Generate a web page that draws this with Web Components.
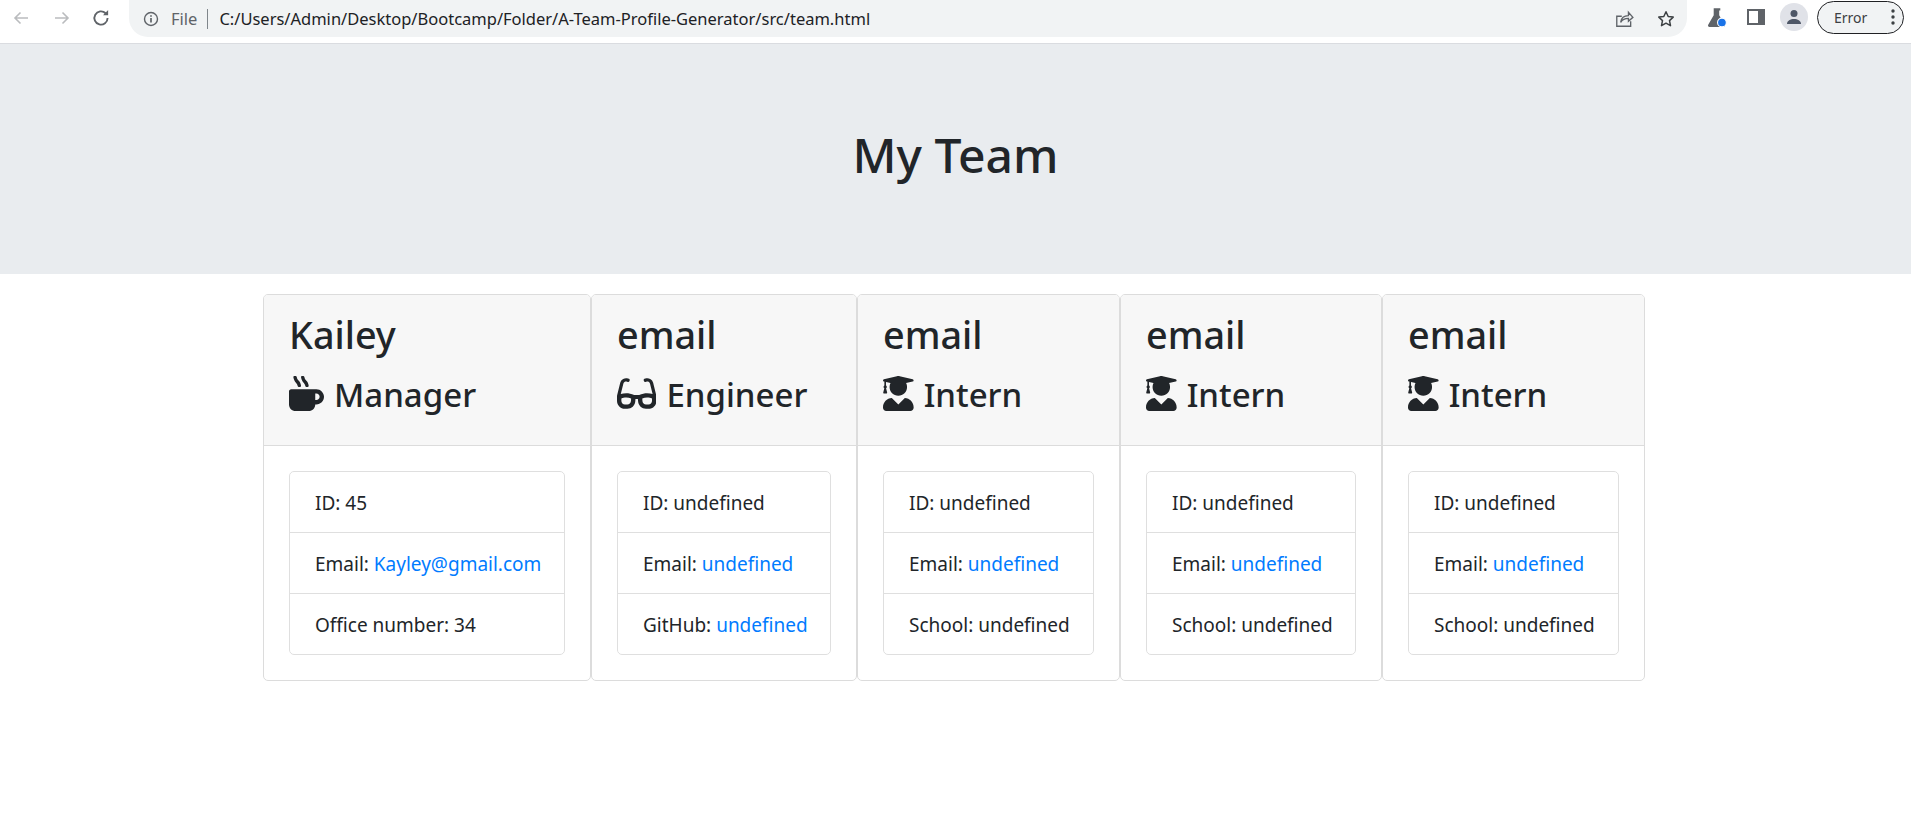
<!DOCTYPE html>
<html>
<head>
<meta charset="utf-8">
<title>My Team</title>
<style>
  html, body { margin: 0; padding: 0; background: #fff; }
  body { font-family: "Noto Sans", "Open Sans", sans-serif; color: #212529; }
</style>
</head>
<body>

<browser-bar url="C:/Users/Admin/Desktop/Bootcamp/Folder/A-Team-Profile-Generator/src/team.html"></browser-bar>
<team-hero>My Team</team-hero>

<team-row>
  <employee-card style="width:328px" name="Kailey" role="Manager" icon="mug">
    <info-row>ID: 45</info-row>
    <info-row>Email: <a href="#">Kayley@gmail.com</a></info-row>
    <info-row>Office number: 34</info-row>
  </employee-card>
  <employee-card style="width:266px" name="email" role="Engineer" icon="glasses">
    <info-row>ID: undefined</info-row>
    <info-row>Email: <a href="#">undefined</a></info-row>
    <info-row>GitHub: <a href="#">undefined</a></info-row>
  </employee-card>
  <employee-card style="width:263px" name="email" role="Intern" icon="grad">
    <info-row>ID: undefined</info-row>
    <info-row>Email: <a href="#">undefined</a></info-row>
    <info-row>School: undefined</info-row>
  </employee-card>
  <employee-card style="width:262px" name="email" role="Intern" icon="grad">
    <info-row>ID: undefined</info-row>
    <info-row>Email: <a href="#">undefined</a></info-row>
    <info-row>School: undefined</info-row>
  </employee-card>
  <employee-card style="width:263px" name="email" role="Intern" icon="grad">
    <info-row>ID: undefined</info-row>
    <info-row>Email: <a href="#">undefined</a></info-row>
    <info-row>School: undefined</info-row>
  </employee-card>
</team-row>

<script>
const ICONS = {
  mug: {
    box: "0 0 512 512",
    d: "M127.1 146.5c1.3 7.7 8 13.5 16 13.5h16.5c9.8 0 17.6-8.5 16.3-18-3.8-28.2-16.4-54.2-36.6-74.7-14.4-14.7-23.6-33.3-26.4-53.5C111.8 5.9 105 0 96.8 0H80.4C70.6 0 63 8.5 64.1 18c3.9 31.9 18 61.3 40.6 84.4 12 12.2 19.7 27.5 22.4 44.1zm112 0c1.3 7.7 8 13.5 16 13.5h16.5c9.8 0 17.6-8.5 16.3-18-3.8-28.2-16.4-54.2-36.6-74.7-14.4-14.7-23.6-33.3-26.4-53.5C223.8 5.9 217 0 208.8 0h-16.4c-9.8 0-17.5 8.5-16.3 18 3.9 31.9 18 61.3 40.6 84.4 12 12.2 19.7 27.5 22.4 44.1zM400 192H32c-17.7 0-32 14.3-32 32v192c0 53 43 96 96 96h192c53 0 96-43 96-96h16c61.8 0 112-50.2 112-112s-50.2-112-112-112zm0 160h-16v-96h16c26.5 0 48 21.5 48 48s-21.5 48-48 48z"
  },
  glasses: {
    box: "0 0 576 512",
    d: "M574.1 280.37L528.75 98.66c-5.91-23.7-21.59-44.05-43-55.81-21.44-11.73-46.97-14.11-70.19-6.33l-15.25 5.08c-8.39 2.79-12.92 11.86-10.12 20.24l5.06 15.18c2.79 8.38 11.85 12.91 20.23 10.12l13.18-4.39c10.87-3.62 23-3.57 33.16 1.73 10.29 5.37 17.57 14.56 20.37 25.82l38.46 153.82c-22.19-6.81-49.79-12.46-81.2-12.46-34.77 0-73.98 7.02-114.85 26.74h-73.18c-40.87-19.74-80.08-26.75-114.86-26.75-31.42 0-59.02 5.65-81.21 12.46l38.46-153.82c2.79-11.25 10.09-20.45 20.38-25.81 10.16-5.3 22.28-5.35 33.15-1.73l13.17 4.39c8.38 2.79 17.44-1.74 20.23-10.12l5.06-15.18c2.8-8.38-1.73-17.45-10.12-20.24l-15.25-5.08c-23.22-7.78-48.75-5.41-70.19 6.33-21.41 11.77-37.09 32.11-43 55.8L1.9 280.37A64.218 64.218 0 0 0 0 295.86v70.25C0 429.01 51.58 480 115.2 480h37.12c60.28 0 110.37-45.94 114.88-105.37l2.93-38.63h35.75l2.93 38.63C313.31 434.06 363.4 480 423.68 480h37.12c63.62 0 115.2-50.99 115.2-113.88v-70.25c0-5.23-.64-10.43-1.9-15.5zm-370.72 89.42c-1.97 25.91-24.4 46.21-51.06 46.21H115.2C86.97 416 64 393.62 64 366.11v-37.54c18.12-6.49 43.42-12.57 72.87-12.57 23.86 0 47.26 4.33 69.93 12.57l-3.43 41.22zM512 366.12c0 27.51-22.97 49.88-51.2 49.88h-37.12c-26.67 0-49.1-20.3-51.06-46.21l-3.13-41.22c22.67-8.24 46.07-12.57 69.93-12.57 29.45 0 54.75 6.08 72.87 12.57v37.55z"
  },
  grad: {
    box: "0 0 448 512",
    d: "M319.4 320.6L224 416l-95.4-95.4C57.1 323.7 0 382.2 0 454.4v9.6c0 26.5 21.5 48 48 48h352c26.5 0 48-21.5 48-48v-9.6c0-72.2-57.1-130.7-128.6-133.8zM13.6 79.8l6.4 1.5v58.4c-7 4.2-12 11.5-12 20.3 0 8.4 4.6 15.4 11.1 19.7L3.5 242c-1.7 6.9 2.1 14 7.6 14h41.8c5.5 0 9.3-7.1 7.6-14l-15.6-62.3C51.4 175.4 56 168.4 56 160c0-8.8-5-16.1-12-20.3V87.1l66 15.9c-8.6 17.2-14 36.4-14 57 0 70.7 57.3 128 128 128s128-57.3 128-128c0-20.6-5.3-39.8-14-57l96.3-23.2c18.2-4.4 18.2-27.1 0-31.5l-190.4-46c-13-3.1-26.7-3.1-39.7 0L13.6 48.2c-18.1 4.4-18.1 27.2 0 31.6z"
  }
};

class BrowserBar extends HTMLElement {
  constructor() {
    super();
    this.attachShadow({mode: "open"});
  }

  connectedCallback() {
    this.shadowRoot.innerHTML = `
      <style>
        :host {
          display: flex;
          align-items: flex-start;
          height: 43px;
          border-bottom: 1px solid #dadce0;
          background: #fff;
          font-family: "Noto Sans", "Open Sans", sans-serif;
          font-size: 16.500px;
          box-sizing: content-box;
        }
        .nav { display: flex; align-items: center; height: 36px; width: 129px; flex: none; }
        .nav svg { flex: none; }
        .omni {
          flex: 1;
          height: 37px;
          display: flex;
          align-items: center;
          background: #f1f3f4;
          border-radius: 0 0 19px 19px;
          padding: 0 0 0 14px;
          min-width: 0;
          box-sizing: border-box;
        }
        .file { color: #5f6368; margin-left: 12px; }
        .sep { width: 1px; height: 20px; background: #80868b; margin: 0 11px 0 10px; }
        .url { color: #202124; white-space: nowrap; flex: 1; }
        .omni-actions { display: flex; align-items: center; gap: 22px; padding-right: 11px; }
        .tools { display: flex; align-items: center; height: 34px; flex: none; padding: 0 7px 0 19px; }
        .pill {
          display: flex;
          align-items: center;
          height: 33px;
          width: 87px;
          margin-left: 9px;
          box-sizing: border-box;
          border: 1px solid #202124;
          border-radius: 17px;
          background: #f1f3f4;
          color: #3c4043;
          font-size: 14px;
          padding-left: 16px;
        }
        .pill span { flex: 1; }
        .pill svg { margin-right: 8px; }
        .avatar {
          width: 28px;
          height: 28px;
          border-radius: 50%;
          background: #e0e2e8;
          display: flex;
          align-items: center;
          justify-content: center;
          margin-left: 14px;
        }
      </style>
      <div class="nav">
        <svg style="margin-left:11px" width="20" height="20" viewBox="0 0 20 20" fill="none" stroke="#babcbe" stroke-width="1.6"><path d="M17 10H4M9.5 4.500L4 10l5.500 5.500"/></svg>
        <svg style="margin-left:21px" width="20" height="20" viewBox="0 0 20 20" fill="none" stroke="#babcbe" stroke-width="1.6"><path d="M3 10h13M10.500 4.500L16 10l-5.500 5.500"/></svg>
        <svg style="margin-left:18px" width="22" height="22" viewBox="0 0 20 20" fill="none" stroke="#5f6368" stroke-width="1.7"><path d="M16 10a6 6 0 1 1-1.800-4.300"/><path d="M16.500 2.800v4.700h-4.700" fill="#5f6368" stroke="none"/></svg>
      </div>
      <div class="omni">
        <svg width="16" height="16" viewBox="0 0 16 16" fill="none" stroke="#5f6368" stroke-width="1.400"><circle cx="8" cy="8" r="6.500"/><path d="M8 7v4.500M8 4.300v1.500" stroke-width="1.700"/></svg>
        <span class="file">File</span>
        <span class="sep"></span>
        <span class="url">${this.getAttribute("url")}</span>
        <div class="omni-actions">
          <svg width="20" height="20" viewBox="0 0 18 18" fill="none" stroke="#5f6368" stroke-width="1.200"><path d="M15 11v4.500H2.500V6.500H7"/><path d="M6 12c.5-4 3-6 7-6V3l4 4.500L13 11V8.500c-3 0-5.500 1-7 3.500z"/></svg>
          <svg width="20" height="20" viewBox="0 0 20 20" fill="none" stroke="#3c4043" stroke-width="1.500"><path d="M10 2.800l2.200 4.700 5 .6-3.700 3.500 1 5.100-4.500-2.500-4.500 2.500 1-5.100L2.800 8.100l5-.6z" stroke-linejoin="round"/></svg>
        </div>
      </div>
      <div class="tools">
        <svg width="22" height="22" viewBox="0 0 20 20"><path d="M7 2h6v2h-1v4.500l5 8.500c.5 1-.1 2-1.200 2H3.200C2.100 19 1.500 18 2 17l5-8.500V4H7z" fill="#5f6368"/><circle cx="14.500" cy="15" r="4" fill="#1a73e8" stroke="#fff" stroke-width="1"/></svg>
        <svg style="margin-left:18px" width="20" height="20" viewBox="0 0 20 20"><path fill-rule="evenodd" d="M1 2h18v16H1zM3 4v12h9V4z" fill="#5f6368"/></svg>
        <span class="avatar"><svg width="18" height="18" viewBox="0 0 18 18" fill="#4d5666"><circle cx="9" cy="5.500" r="3.500"/><path d="M2 16c0-3.500 3.500-5 7-5s7 1.500 7 5z"/></svg></span>
        <div class="pill"><span>Error</span><svg width="4" height="16" viewBox="0 0 4 16" fill="#3c4043"><circle cx="2" cy="2" r="1.700"/><circle cx="2" cy="8" r="1.700"/><circle cx="2" cy="14" r="1.700"/></svg></div>
      </div>`;
  }
}

class TeamHero extends HTMLElement {
  constructor() {
    super();
    this.attachShadow({mode: "open"});
    this.shadowRoot.innerHTML = `
      <style>
        :host {
          display: flex;
          justify-content: center;
          align-items: flex-start;
          height: 230px;
          box-sizing: border-box;
          padding-top: 81px;
          margin-bottom: 20px;
          background: #e9ecef;
        }
        h1 { margin: 0; font-size: 48px; font-weight: 500; line-height: 60px; color: #212529; }
      </style>
      <h1><slot></slot></h1>`;
  }
}

class TeamRow extends HTMLElement {
  constructor() {
    super();
    this.attachShadow({mode: "open"});
    this.shadowRoot.innerHTML = `
      <style>
        :host { display: flex; justify-content: flex-start; padding-left: 263px; }
      </style>
      <slot></slot>`;
  }
}

class EmployeeCard extends HTMLElement {
  constructor() {
    super();
    this.attachShadow({mode: "open"});
  }

  connectedCallback() {
    const icon = ICONS[this.getAttribute("icon")];
    this.shadowRoot.innerHTML = `
      <style>
        :host {
          display: block;
          flex: none;
          box-sizing: border-box;
          border: 1px solid #dcdcdc;
          border-radius: 5px;
          overflow: hidden;
          background: #fff;
        }
        header {
          padding: 17px 25px 20px;
          height: 113px;
          background: #f7f7f7;
          border-bottom: 1px solid #dcdcdc;
        }
        h2, h3 { margin: 0; font-weight: 500; line-height: 1.2; color: #212529; white-space: nowrap; }
        h2 { font-size: 37.800px; margin-bottom: 18px; }
        h3 { font-size: 33px; }
        svg { height: 35px; vertical-align: -4px; fill: #212529; margin-right: 10px; }
        .list {
          margin: 25px;
          border: 1px solid #dfdfdf;
          border-radius: 5px;
        }
      </style>
      <header>
        <h2>${this.getAttribute("name")}</h2>
        <h3><svg viewBox="${icon.box}"><path d="${icon.d}"/></svg>${this.getAttribute("role")}</h3>
      </header>
      <div class="list"><slot></slot></div>`;
  }
}

class InfoRow extends HTMLElement {
  constructor() {
    super();
    this.attachShadow({mode: "open"});
    this.shadowRoot.innerHTML = `
      <style>
        :host {
          display: block;
          padding: 16px 25px 14px;
          font-size: 19px;
          line-height: 30px;
          color: #212529;
          white-space: nowrap;
          border-bottom: 1px solid #dfdfdf;
        }
        :host(:last-child) { border-bottom: 0; }
        ::slotted(a) { color: #007bff; text-decoration: none; }
      </style>
      <slot></slot>`;
  }
}

customElements.define("browser-bar", BrowserBar);
customElements.define("team-hero", TeamHero);
customElements.define("team-row", TeamRow);
customElements.define("employee-card", EmployeeCard);
customElements.define("info-row", InfoRow);
</script>
</body>
</html>
